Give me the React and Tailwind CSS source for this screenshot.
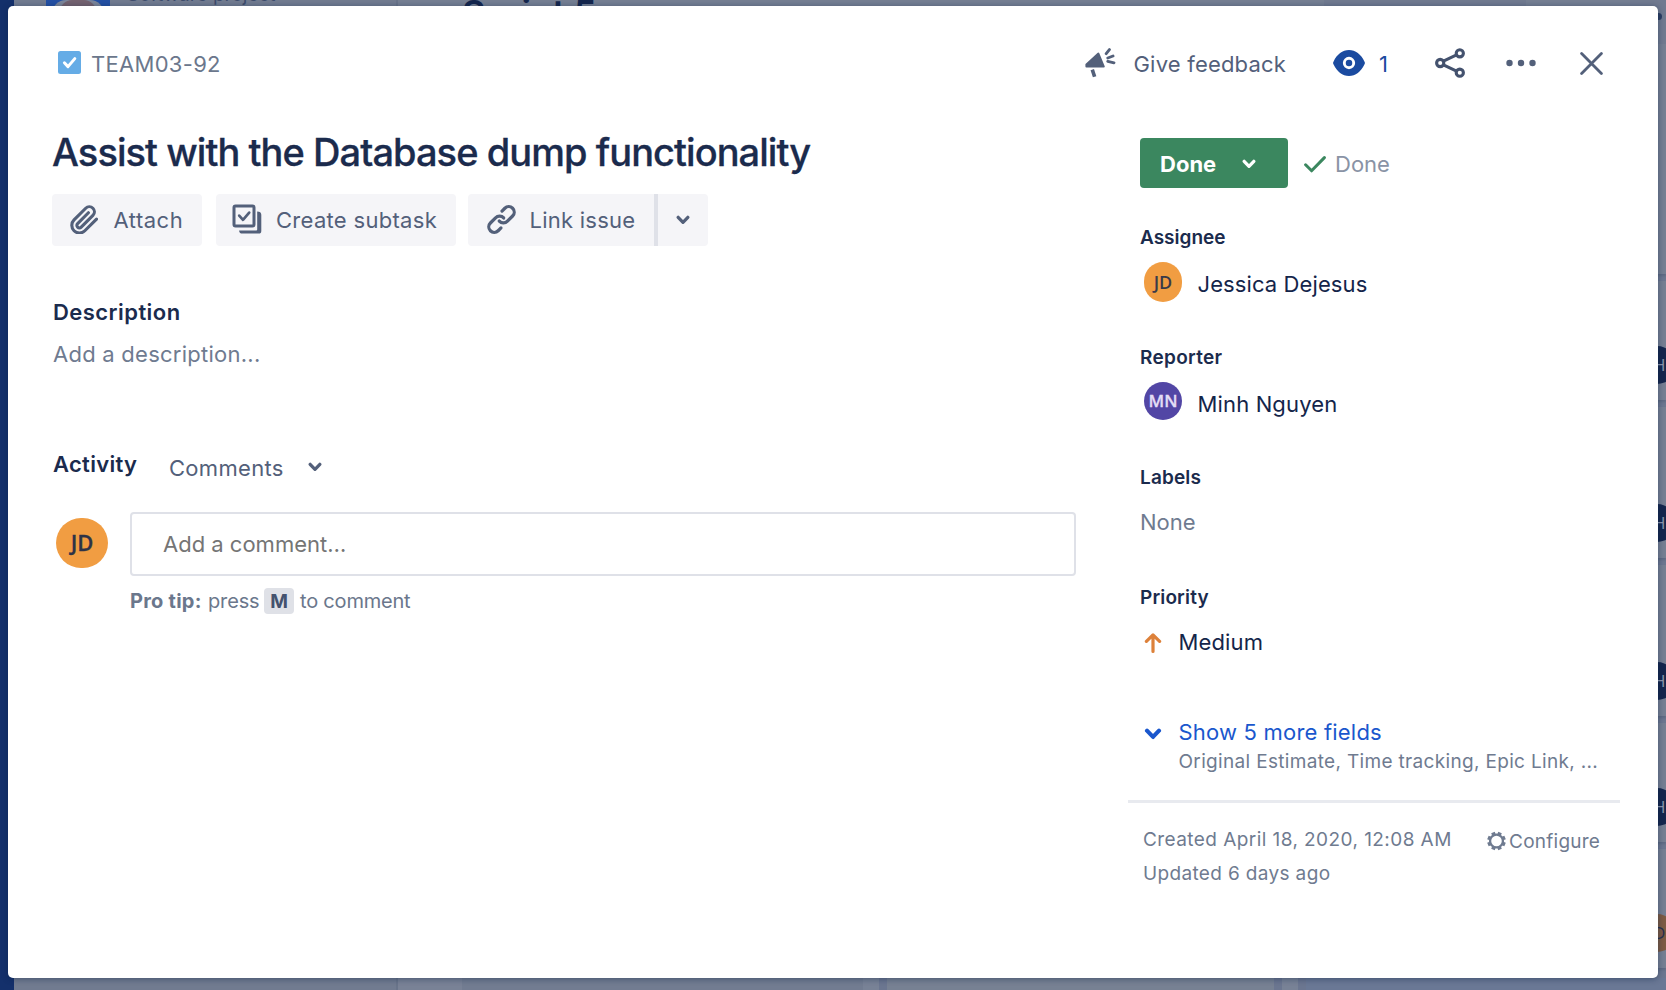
const ink = "text-[#53607a]";

function Chevron({ className = "", width = 14, height = 10, stroke = 3 }) {
  return (
    <svg className={className} width={width} height={height} viewBox="0 0 13 9" fill="none" stroke="currentColor" strokeWidth={stroke} strokeLinecap="round" strokeLinejoin="round">
      <path d="M2 2l4.5 4.7L11 2" />
    </svg>
  );
}

function TaskIcon() {
  return (
    <svg width="23" height="23" viewBox="0 0 23 23" fill="none" className="mb-[3px]">
      <rect width="23" height="23" rx="2.5" fill="#65ace6" />
      <path d="M6.4 11.8l3.600 3.800 6.800-8" stroke="#fff" strokeWidth="3" strokeLinecap="round" strokeLinejoin="round" />
    </svg>
  );
}

function MegaphoneIcon() {
  return (
    <svg width="31" height="30" viewBox="0 0 31 30" className="mb-0.5" fill="none" stroke="currentColor" strokeLinecap="round" strokeLinejoin="round">
      <path d="M13.4 5.6L1.4 16.4v2.2h17.4z" fill="currentColor" strokeWidth="2" />
      <path d="M7.3 21.600l2.300 7.200" strokeWidth="3.6" strokeLinecap="butt" />
      <path d="M21.200 5.600l3.200-4M22.800 10l5.200-2M22.800 13.400l6.200 1.400" strokeWidth="2.900" />
    </svg>
  );
}

function EyeIcon() {
  return (
    <svg width="32" height="26" viewBox="0 0 32 26" className="mb-0.5">
      <path d="M.6 14.600a3 3 0 0 1 0-3.200C4 4.200 9.500 0 16 0s12 4.200 15.400 11.400a3 3 0 0 1 0 3.200C28 21.800 22.500 26 16 26S4 21.800.6 14.600z" fill="currentColor" />
      <circle cx="16" cy="13" r="4.700" fill="none" stroke="#fff" strokeWidth="2.900" />
    </svg>
  );
}

function ShareIcon() {
  return (
    <svg width="30" height="30" viewBox="0 0 30 30" className="mb-0.5" fill="none" stroke="currentColor" strokeWidth="3.100">
      <circle cx="5.200" cy="15" r="3.600" />
      <circle cx="24.800" cy="5.300" r="3.600" />
      <circle cx="24.800" cy="24.700" r="3.600" />
      <path d="M8.400 13.200l13.200-6.400M8.400 16.800l13.200 6.400" />
    </svg>
  );
}

function DotsIcon() {
  return (
    <svg width="30" height="8" viewBox="0 0 30 8" className="mb-0.5" fill="currentColor">
      <circle cx="3.500" cy="4" r="3.200" />
      <circle cx="15" cy="4" r="3.200" />
      <circle cx="26.500" cy="4" r="3.200" />
    </svg>
  );
}

function CloseIcon() {
  return (
    <svg width="23" height="23" viewBox="0 0 23 23" className="mb-0.5" fill="none" stroke="currentColor" strokeWidth="2.800" strokeLinecap="round">
      <path d="M1.600 1.600l19.800 19.800M21.400 1.600L1.600 21.400" />
    </svg>
  );
}

function PaperclipIcon() {
  return (
    <svg width="28" height="29" viewBox="0.6 0 22 22.8" className="-mt-0.5" fill="none" stroke="currentColor" strokeWidth="2.450" strokeLinecap="round" strokeLinejoin="round">
      <path d="M21.440 11.050l-9.190 9.190a6 6 0 0 1-8.490-8.490l9.190-9.190a4 4 0 0 1 5.660 5.660l-9.200 9.190a2 2 0 0 1-2.830-2.830l8.490-8.480" />
    </svg>
  );
}

function SubtaskIcon() {
  return (
    <svg width="30" height="30" viewBox="0 0 30 30" className="-mt-0.5" fill="none" stroke="currentColor" strokeWidth="3" strokeLinejoin="round" strokeLinecap="round">
      <rect x="2" y="2" width="20" height="20" rx="1.500" />
      <path d="M25.200 7.400q4.100 0 4.100 3.400V27a2.600 2.600 0 0 1-2.600 2.600H10.500q-3.200 0-3.400-3.200h17.100a1 1 0 0 0 1-1z" fill="currentColor" stroke="none" />
      <path d="M7.200 11.600l3.800 4.200 6.200-7.200" strokeWidth="2.700" />
    </svg>
  );
}

function LinkIcon() {
  return (
    <svg width="31" height="31" viewBox="0 0 24 24" className="-mt-0.5" fill="none" stroke="currentColor" strokeWidth="2.500" strokeLinecap="round" strokeLinejoin="round">
      <path d="M10.300 13.200a4.300 4.300 0 0 0 6.300.1l4-4a4.200 4.200 0 0 0-6-6l-2.200 2.200" />
      <path d="M13.700 10.800a4.300 4.300 0 0 0-6.300-.1l-4 4a4.200 4.200 0 0 0 6 6l2.200-2.200" />
    </svg>
  );
}

function GearIcon() {
  return (
    <svg width="19" height="20" viewBox="-9 -9 18 18" className="mb-0.5" fill="none" stroke="currentColor">
      <circle r="6.100" strokeWidth="2.200" />
      {[22.5, 67.5, 112.5, 157.5].map((a) => (
        <g key={a} transform={`rotate(${a})`}>
          <path d="M0-8.800v2.600M0 8.800v-2.600" strokeWidth="3.600" />
        </g>
      ))}
    </svg>
  );
}

function Field({ label, className, children }) {
  return (
    <section className={className}>
      <h3 className="h-6 pt-px text-[19px] leading-6 font-semibold text-[#1b2b4d]">{label}</h3>
      {children}
    </section>
  );
}

function BoardCard({ className, initials = "JH", color = "bg-[#14264d] text-[#8b96ad]" }) {
  return (
    <div className={`flex shrink-0 items-end bg-[#757f93] shadow-[0_2px_2px_#5f6a83] ${className}`}>
      <div className={`mb-[16px] ml-[28px] flex size-[38px] shrink-0 items-center justify-center rounded-full font-['Open_Sans',sans-serif] text-[17px] ${color}`}>
        {initials}
      </div>
    </div>
  );
}

function Board() {
  return (
    <div className="flex h-full w-full bg-[#757f93]" aria-hidden="true">
      <div className="w-3.5 shrink-0 bg-[#14306b]" />
      <div className="flex w-[384px] shrink-0 items-start border-r-2 border-[#69748a] bg-[#717b90] pl-8">
        <div className="flex h-4 w-16 justify-center bg-[#2450a4]">
          <div className="flex h-4 w-[52px] justify-center rounded-t-[14px] bg-[#7c869a]">
            <div className="h-4 w-9 rounded-t-[12px] bg-[#74626f]" />
          </div>
        </div>
        <span className="-mt-[17px] ml-[17px] text-[19px] leading-6 whitespace-nowrap text-[#3d4c6c]">Software project</span>
      </div>
      <div className="flex min-w-0 flex-1 flex-col justify-between">
        <div className="flex h-11 justify-between">
          <span className="-mt-[9px] ml-16 text-[36px] leading-[44px] font-semibold tracking-[-0.3px] whitespace-nowrap text-[#14264d]">Sprint 5</span>
          <div className="flex">
            <div className="h-11 w-[202px] bg-[#707a90]" />
            <div className="w-[104px]" />
            <div className="flex h-11 w-9 items-start bg-[#707a90] pt-[13px] pl-[25px]">
              <span className="size-[7px] rounded-full bg-[#2c3d62]" />
            </div>
          </div>
        </div>
        <div className="flex h-3">
          <div className="w-16 bg-[#798296]" />
          <div className="w-[401px] bg-[#727c91]" />
          <div className="w-4 bg-[#788296]" />
          <div className="w-2 bg-[#6b7690]" />
          <div className="w-[387px] bg-[#778193]" />
          <div className="w-2 bg-[#6b7690]" />
          <div className="w-4 bg-[#788296]" />
          <div className="w-2 bg-[#6b7690]" />
          <div className="flex-1 bg-[#6a7895]" />
        </div>
      </div>
    </div>
  );
}

function BoardEdge() {
  return (
    <div className="absolute top-[214px] right-0 flex h-[764px] w-14 flex-col gap-[7px] overflow-hidden bg-[#6c7790]" aria-hidden="true">
      <BoardCard className="h-[60px] [&>div]:hidden" />
      <BoardCard className="h-[119px]" />
      <BoardCard className="h-[151px]" />
      <BoardCard className="h-[151px]" />
      <BoardCard className="h-[119px]" />
      <BoardCard className="h-[119px]" initials="JD" color="bg-[#7d5b44] text-[#25304e]" />
    </div>
  );
}

export default function App() {
  return (
    <div className="relative h-[990px] w-[1666px] overflow-hidden font-['Inter',sans-serif] text-[22px] leading-7">
      <Board />
      <BoardEdge />

      <div role="dialog" className="absolute top-1.5 left-2 h-[972px] w-[1650px] rounded-[5px] bg-white pt-[37px] pl-11 shadow-[0_1px_6px_rgba(9,30,66,0.45)]">
        <header className={`flex h-[42px] items-center pl-[5.500px] ${ink}`}>
          <TaskIcon />
          <span className="ml-[10.5px] w-[994px] tracking-[0.3px] text-[#6b778c]">TEAM03-92</span>
          <MegaphoneIcon />
          <span className="ml-[17.5px] w-[199.5px] tracking-[0.2px]">Give feedback</span>
          <span className="flex items-center text-[#1b4ba0]">
            <EyeIcon />
            <span className="ml-3.5 w-14">1</span>
          </span>
          <span className="text-[#44526e]"><ShareIcon /></span>
          <span className="ml-[41px]"><DotsIcon /></span>
          <span className="ml-[43.5px]"><CloseIcon /></span>
        </header>

        <div className="flex">
          <main className="w-[1024px] pt-[45px]">
            <h1 className="text-[38px] leading-[44px] font-medium tracking-[-0.94px] whitespace-nowrap text-[#1b2b4d] [-webkit-text-stroke:0.3px_#1b2b4d]">
              Assist with the Database dump functionality
            </h1>

            <div className={`mt-5 flex h-[52px] ${ink}`}>
              <button className="flex w-[150px] items-center rounded bg-[#f5f5f8] pl-[18px]">
                <PaperclipIcon />
                <span className="ml-[15.5px] tracking-[0.5px]">Attach</span>
              </button>
              <button className="ml-3.5 flex w-60 items-center rounded bg-[#f5f5f8] pl-4">
                <SubtaskIcon />
                <span className="ml-3.5 tracking-[0.3px]">Create subtask</span>
              </button>
              <button className="ml-3 flex w-[186px] items-center rounded-l bg-[#f5f5f8] pl-[17.5px]">
                <LinkIcon />
                <span className="ml-[13px] tracking-[0.25px]">Link issue</span>
              </button>
              <button className="flex w-[54px] items-center rounded-r border-l-4 border-[#dfe1e8] bg-[#f5f5f8] pl-[18px]">
                <Chevron />
              </button>
            </div>

            <div className="pl-px">
              <h2 className="mt-[52px] font-semibold tracking-[0.45px] text-[#1b2b4d]">Description</h2>
              <p className="mt-3.5 tracking-[0.25px] text-[#6f7b90]">Add a description...</p>

              <div className="mt-[82px] flex h-8 items-start">
                <h2 className="w-[116px] font-semibold tracking-[0.3px] text-[#1b2b4d]">Activity</h2>
                <button className={`flex items-center pt-1 ${ink}`}>
                  <span className="w-[139px] text-left tracking-[0.3px]">Comments</span>
                  <Chevron className="mb-[3px]" />
                </button>
              </div>
            </div>

            <div className="mt-[30px] flex items-start pl-1">
              <div className="mt-1.5 flex h-[50px] w-[52px] items-center justify-center rounded-full bg-[#f19d42] pb-[3px] font-['Open_Sans',sans-serif] text-[22px] font-semibold text-[#2d3347] [-webkit-text-stroke:0.3px_#2d3347]">
                JD
              </div>
              <div className="ml-[22px] w-[946px]">
                <div className="flex h-16 items-center rounded border-2 border-[#dfe1e8] pl-[31px] text-[#757575]">Add a comment…</div>
                <p className="mt-3 flex h-[26px] items-center text-[20px] text-[#6b778c]">
                  <strong className="w-[78px] font-bold tracking-[0.25px]">Pro tip:</strong>
                  <span className="w-14 tracking-[-0.15px]">press</span>
                  <kbd className="flex h-[26px] w-[30px] items-center justify-center rounded bg-[#dfe1e7] pt-px font-['Inter',sans-serif] text-[19px] font-bold text-[#44526e]">M</kbd>
                  <span className="ml-1.5 tracking-[-0.2px]">to comment</span>
                </p>
              </div>
            </div>
          </main>

          <aside className="ml-[52px] w-[492px] pt-[53px]">
            <div className="pl-3">
              <div className="flex h-[50px] items-center">
                <button className="flex h-[50px] w-[148px] items-center rounded bg-[#3b875f] pl-5 text-white">
                  <span className="w-[82px] pt-0.5 text-left font-bold">Done</span>
                  <Chevron className="mt-px" />
                </button>
                <svg className="ml-4 mt-0.5" width="22" height="17" viewBox="0 0 22 17" fill="none" stroke="#3b875f" strokeWidth="3" strokeLinecap="round" strokeLinejoin="round">
                  <path d="M1.600 8.800l6 6L20.400 1.600" />
                </svg>
                <span className="ml-[9px] pt-0.5 text-[#8993a5]">Done</span>
              </div>

              <Field label="Assignee" className="mt-[37px]">
                <div className="mt-[13px] flex h-10 items-start pl-1">
                  <div className="flex h-10 w-[38px] items-center justify-center rounded-full bg-[#f19d42] font-['Open_Sans',sans-serif] text-[18px] font-semibold text-[#3a3a48]">JD</div>
                  <span className="ml-[15.5px] pt-2 tracking-[0.1px] text-[#14254a]">Jessica Dejesus</span>
                </div>
              </Field>

              <Field label="Reporter" className="mt-[43px] [&>h3]:tracking-[0.3px]">
                <div className="mt-[13px] flex h-10 items-start pl-1">
                  <div className="flex size-[38px] items-center justify-center rounded-full bg-[#5246a5] pb-px font-['Open_Sans',sans-serif] text-[17px] font-semibold text-[#e3ddf5] [-webkit-text-stroke:0.3px_#e3ddf5]">MN</div>
                  <span className="ml-[15.5px] pt-2 tracking-[0.15px] text-[#14254a]">Minh Nguyen</span>
                </div>
              </Field>

              <Field label="Labels" className="mt-[43px] [&>h3]:tracking-[0.15px]">
                <p className="mt-[19px] text-[#6f7b90]">None</p>
              </Field>

              <Field label="Priority" className="mt-[49px] [&>h3]:tracking-[0.15px]">
                <div className="mt-[19px] flex h-7 items-center pl-1">
                  <svg width="18" height="20" viewBox="0 0 18 20" fill="none" stroke="#dd813a" strokeWidth="3.200" strokeLinecap="round" strokeLinejoin="round" className="mt-px">
                    <path d="M9 2.400v16M2.400 8.400L9 1.900l6.600 6.500" />
                  </svg>
                  <span className="ml-[16.5px] tracking-[0.15px] text-[#14254a]">Medium</span>
                </div>
              </Field>

              <button className="mt-[62px] flex h-7 items-center pl-1 text-[#1a57cd]">
                <Chevron className="mt-1" width={18} height={12} stroke={3.1} />
                <span className="ml-[16.5px] tracking-[0.2px]">Show 5 more fields</span>
              </button>
              <p className="mt-1 pl-[38.5px] text-[19px] leading-6 tracking-[0.33px] whitespace-nowrap text-[#6f7b90]">
                Original Estimate, Time tracking, Epic Link, ...
              </p>
            </div>

            <hr className="mt-[26px] h-[3px] border-0 bg-[#e8eaef]" />

            <footer className="mt-[25px] flex items-start pl-[15px] text-[19px] leading-6 text-[#6f7b90]">
              <div className="w-[343.5px] tracking-[0.43px]">
                <p>Created April 18, 2020, 12:08 AM</p>
                <p className="mt-2.5 tracking-[0.35px]">Updated 6 days ago</p>
              </div>
              <button className="mt-0.5 flex items-center">
                <GearIcon />
                <span className="ml-[3.5px] tracking-[0.25px]">Configure</span>
              </button>
            </footer>
          </aside>
        </div>
      </div>
    </div>
  );
}
